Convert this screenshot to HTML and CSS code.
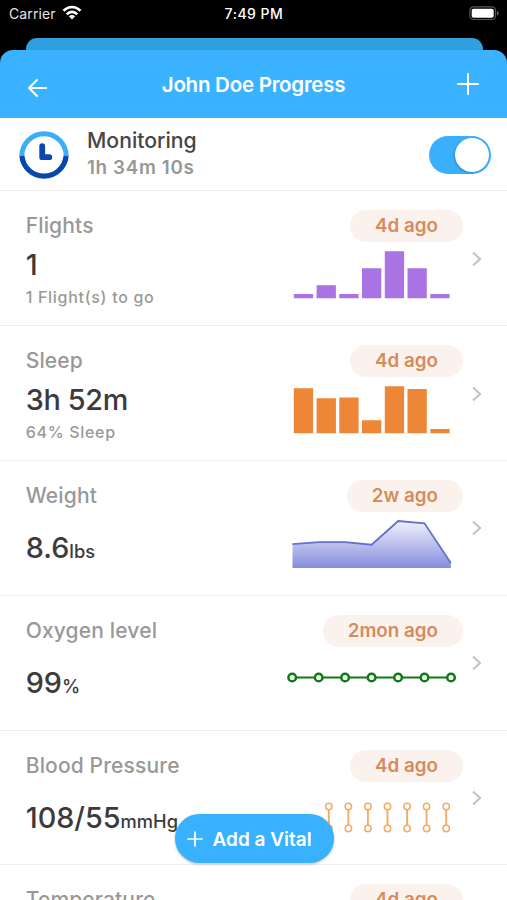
FILE: index.html
```
<!DOCTYPE html>
<html lang="en">
<head>
<meta charset="utf-8">
<title>John Doe Progress</title>
<link rel="stylesheet" href="styles.css">
</head>
<body>
<div class="screen">
  <div class="status">
    <div class="carrier"><span>Carrier</span>
      <svg width="20" height="16" viewBox="0 0 20 16" fill="none" stroke="#fff" stroke-width="2.5"><path d="M1.5 5.8Q10 -1.8 18.5 5.8M4.7 9.2Q10 4.6 15.3 9.2"/><path d="M6.8 11.3Q10 8.7 13.2 11.3L10 14.6Z" fill="#fff" stroke="none"/></svg>
    </div>
    <div class="clock">7:49 PM</div>
    <svg class="battery" width="30" height="15" viewBox="0 0 30 15"><rect x=".9" y=".9" width="25.6" height="12.6" rx="3.6" fill="none" stroke="#59595b" stroke-width="1.2"/><rect x="2.7" y="2.7" width="22" height="9" rx="1.8" fill="#fff"/><path d="M28 5q3 2.2 0 4.4z" fill="#77777a"/></svg>
  </div>
  <div class="back-sheet"></div>
  <header class="header">
    <svg width="20" height="20" viewBox="0 0 20 20" fill="none" stroke="#fff" stroke-width="2" stroke-linecap="round" stroke-linejoin="round"><path d="M18.2 10H1M9 2L1 10L9 18"/></svg>
    <h1>John Doe Progress</h1>
    <svg class="plus" width="22" height="22" viewBox="0 0 22 22" stroke="#fff" stroke-width="2" stroke-linecap="round"><path d="M11 1V21M1 11H21"/></svg>
  </header>
  <section class="monitor">
    <svg width="50" height="50" viewBox="0 0 50 50" fill="none"><path d="M2.8 27A22 22 0 1 1 47.2 27" stroke="#3baefa" stroke-width="5"/><path d="M2.9 27A22.2 22.2 0 0 0 47.1 27" stroke="#0747ae" stroke-width="5.2"/><path d="M23.2 17.2V28.2H30.3" stroke="#0747ae" stroke-width="5.8" stroke-linecap="round" stroke-linejoin="round"/></svg>
    <div class="monitor-text"><div class="monitor-title">Monitoring</div><div class="monitor-time">1h 34m 10s</div></div>
    <div class="toggle"><div class="knob"></div></div>
  </section>
  <main>
    <article class="row">
      <div class="info"><div class="name">Flights</div><div class="value">1</div><div class="sub">1 Flight(s) to go</div></div>
      <div class="side"><div class="pill">4d ago</div>
        <svg width="180" height="60" fill="#aa73e4"><path d="M10.8 49h19.3v4.2h-19.3zM33.6 40.3h19.3v12.9h-19.3zM56.3 49h19.3v4.2h-19.3zM79 23.3h19.3v29.9h-19.3zM101.8 6.2h19.3v47h-19.3zM124.5 23.3h19.3v29.9h-19.3zM147.3 49h19.3v4.2h-19.3z"/></svg></div>
      <svg class="chevron" width="12" height="16"><path d="M2 1.5L9 8L2 14.5"/></svg>
    </article>
    <article class="row">
      <div class="info"><div class="name">Sleep</div><div class="value tight">3h 52m</div><div class="sub">64% Sleep</div></div>
      <div class="side"><div class="pill">4d ago</div>
        <svg width="180" height="60" fill="#ee8637"><path d="M10.8 8.2h19.3v45h-19.3zM33.6 18.2h19.3v35h-19.3zM56.3 17.5h19.3v35.7h-19.3zM79 40.3h19.3v12.9h-19.3zM101.8 6.3h19.3v46.9h-19.3zM124.5 9h19.3v44.2h-19.3zM147.3 49h19.3v4.2h-19.3z"/></svg></div>
      <svg class="chevron" width="12" height="16"><path d="M2 1.5L9 8L2 14.5"/></svg>
    </article>
    <article class="row">
      <div class="info single"><div class="name">Weight</div><div class="value">8.6<span>lbs</span></div></div>
      <div class="side"><div class="pill">2w ago</div>
        <svg width="180" height="60"><defs><linearGradient id="area" x1="0" y1="0" x2="0" y2="1"><stop offset="0" stop-color="#f0f1fb"/><stop offset="1" stop-color="#858ddd"/></linearGradient></defs><path fill="url(#area)" d="M9.5 29.1L36 27.2H62L88.6 29.7L115.2 6L141.5 8.3L167.8 48V53H9.5Z"/><path fill="none" stroke="#6470cc" stroke-width="1.8" d="M9.5 29.1L36 27.2H62L88.6 29.7L115.2 6L141.5 8.3L167.8 48"/></svg></div>
      <svg class="chevron" width="12" height="16"><path d="M2 1.5L9 8L2 14.5"/></svg>
    </article>
    <article class="row">
      <div class="info single"><div class="name">Oxygen level</div><div class="value">99<span>%</span></div></div>
      <div class="side"><div class="pill">2mon ago</div>
        <svg width="180" height="60" fill="#fff" stroke="#107a14" stroke-width="2.5"><path stroke-width="2.1" d="M9.2 27.5H168"/><circle cx="9.2" cy="27.5" r="3.8"/><circle cx="35.7" cy="27.5" r="3.8"/><circle cx="62.1" cy="27.5" r="3.8"/><circle cx="88.6" cy="27.5" r="3.8"/><circle cx="115.1" cy="27.5" r="3.8"/><circle cx="141.5" cy="27.5" r="3.8"/><circle cx="168" cy="27.5" r="3.8"/></svg></div>
      <svg class="chevron" width="12" height="16"><path d="M2 1.5L9 8L2 14.5"/></svg>
    </article>
    <article class="row">
      <div class="info single"><div class="name">Blood Pressure</div><div class="value">108/55<span>mmHg</span></div></div>
      <div class="side"><div class="pill">4d ago</div>
        <svg width="180" height="60" fill="#fff" stroke="#f5ac62" stroke-width="1.5"><path stroke-width="1.9" d="M45.8 21.5v22M65.4 21.5v22M84.9 21.5v22M104.5 21.5v22M124.1 21.5v22M143.6 21.5v22M163.2 21.5v22"/><circle cx="45.8" cy="21.5" r="3.2"/><circle cx="65.4" cy="21.5" r="3.2"/><circle cx="84.9" cy="21.5" r="3.2"/><circle cx="104.5" cy="21.5" r="3.2"/><circle cx="124.1" cy="21.5" r="3.2"/><circle cx="143.6" cy="21.5" r="3.2"/><circle cx="163.2" cy="21.5" r="3.2"/><circle cx="45.8" cy="43.5" r="3.2"/><circle cx="65.4" cy="43.5" r="3.2"/><circle cx="84.9" cy="43.5" r="3.2"/><circle cx="104.5" cy="43.5" r="3.2"/><circle cx="124.1" cy="43.5" r="3.2"/><circle cx="143.6" cy="43.5" r="3.2"/><circle cx="163.2" cy="43.5" r="3.2"/></svg></div>
      <svg class="chevron" width="12" height="16"><path d="M2 1.5L9 8L2 14.5"/></svg>
    </article>
    <article class="row">
      <div class="info single"><div class="name">Temperature</div></div>
      <div class="side"><div class="pill">4d ago</div></div>
    </article>
  </main>
  <button class="add"><svg width="16" height="16" viewBox="0 0 16 16" stroke="#fff" stroke-width="1.7" stroke-linecap="round"><path d="M8 1V15M1 8H15"/></svg><span>Add a Vital</span></button>
</div>
</body>
</html>
```
FILE: styles.css
```
* { box-sizing: border-box; }
body { margin: 0; font-family: Inter, sans-serif; background: #000; }
svg { display: block; flex: none; }
.screen { position: relative; width: 507px; height: 900px; overflow: hidden; white-space: nowrap; }
.status { height: 38px; padding: 0 8px 12px 9px; display: grid; grid-template-columns: 1fr auto 1fr; align-items: center; color: #fff; font-size: 14px; }
.carrier { display: flex; align-items: center; gap: 6px; color: #e4e4e4; letter-spacing: .1px; }
.clock { font-weight: 500; letter-spacing: .5px; }
.battery { justify-self: end; }
.back-sheet { height: 12px; margin: 0 24px 0 26px; background: #309fdf; border-radius: 11px 11px 0 0; }
.header { height: 68px; padding: 0 28px; background: #3ab2ff; border-radius: 13px 13px 0 0; display: grid; grid-template-columns: 22px 1fr 22px; align-items: center; }
.header svg:first-child { margin-top: 8px; }
.header h1 { margin: 0; text-align: center; color: #fff; font-size: 20.5px; font-weight: 600; letter-spacing: -.25px; }
.monitor { height: 73.4px; background: #fff; border-bottom: 1.5px solid #efefef; display: flex; align-items: center; padding: 0 16px 0 19px; }
.monitor-text { flex: 1; margin-left: 18px; }
.monitor-title { height: 27px; line-height: 26px; font-size: 21.2px; font-weight: 500; color: #484545; }
.monitor-time { height: 28px; line-height: 28px; font-size: 18.8px; font-weight: 600; letter-spacing: .65px; color: #979797; }
.toggle { width: 62.5px; height: 38px; margin-top: 1px; padding: 2px; border-radius: 19px; background: #3aaffb; display: flex; justify-content: flex-end; }
.knob { width: 34px; height: 34px; border-radius: 50%; background: #fff; box-shadow: -1px 1px 2px rgba(0,60,120,.3); }
.row { height: 134.8px; background: #fff; border-bottom: 1.7px solid #eee; display: flex; padding-left: 25.7px; }
.info { flex: 1; padding-top: 21px; }
.name { height: 28px; line-height: 28px; font-size: 21px; font-weight: 500; letter-spacing: .15px; color: #989898; }
.value { height: 50px; line-height: 50px; font-size: 28.8px; font-weight: 550; color: #3d3a3b; }
.tight { letter-spacing: -.3px; }
.value span { font-size: 18.3px; font-weight: 500; }
.sub { height: 16px; line-height: 14px; font-size: 16px; font-weight: 500; letter-spacing: .7px; color: #999; }
.single .value { margin-top: 13px; }
.side { width: 180px; display: flex; flex-direction: column; align-items: flex-end; padding-top: 19px; margin-right: 44px; }
.pill { height: 32px; line-height: 32px; padding: 0 25px; border-radius: 16px; background: #fbf2ee; color: #d58b5d; font-size: 18.8px; font-weight: 600; }
.side svg { margin-top: 3px; }
.chevron { align-self: center; margin: 1px 24px 0 -36px; fill: none; stroke: #c5c5c7; stroke-width: 2.2; }
.add { position: absolute; left: 174.5px; top: 814px; width: 159px; height: 49px; border: 0; border-radius: 25px; background: #38b1ff; box-shadow: 0 1px 3px rgba(0,0,0,.25); color: #fff; display: flex; align-items: center; padding: 1px 0 0 12px; gap: 10px; font: 600 19px Inter, sans-serif; }
```
